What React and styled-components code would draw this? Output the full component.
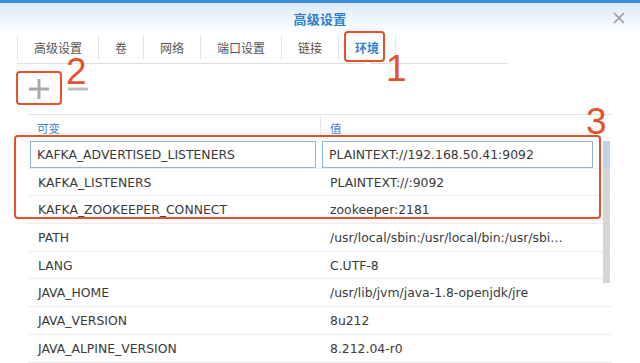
import React from "react";
import styled, { createGlobalStyle } from "styled-components";

const GlobalStyle = createGlobalStyle`
	html, body {
		margin: 0;
		padding: 0;
		background: #ffffff;
	}
	body {
		font-family: "DejaVu Sans", "Noto Sans CJK SC", sans-serif;
	}
`;

const Window = styled.div`
	position: relative;
	display: flex;
	flex-direction: column;
	width: 640px;
	height: 363px;
	overflow: hidden;
	background: #ffffff;
`;

const TopStrip = styled.div`
	height: 3px;
	background: #3b8ede;
`;

const TitleBar = styled.div`
	display: grid;
	grid-template-columns: 1fr auto 1fr;
	align-items: center;
	height: 30px;
	background: linear-gradient(to bottom, #dbeafa 0%, #f3f8fe 70%, #ffffff 100%);
`;

const Title = styled.div`
	grid-column: 2;
	font-family: "Noto Sans CJK SC", sans-serif;
	font-size: 13px;
	font-weight: 700;
	color: #2f7fcf;
	letter-spacing: 0.3px;
`;

const CloseButton = styled.div`
	grid-column: 3;
	justify-self: end;
	display: flex;
	margin-right: 15px;
	cursor: pointer;
`;

const Tabs = styled.div`
	display: flex;
	align-items: stretch;
	width: 491px;
	height: 30px;
	margin-left: 17px;
	border-bottom: 1px solid #e0e0e0;
`;

const Tab = styled.div`
	position: relative;
	display: flex;
	align-items: center;
	justify-content: center;
	padding: 0 ${(p) => p.$pad || 16}px;
	margin: 2px 0 3px;
	border-left: 1px solid #e6e6e6;
	font-family: "Noto Sans CJK SC", sans-serif;
	font-size: 12px;
	color: ${(p) => (p.$active ? "#2f7fd2" : "#555555")};
	font-weight: ${(p) => (p.$active ? 700 : 400)};
	&:last-child {
		border-right: 1px solid #e6e6e6;
	}
	${(p) =>
		p.$active &&
		`
		&::after {
			content: "";
			position: absolute;
			left: 50%;
			bottom: -7px;
			width: 6px;
			height: 6px;
			margin-left: -3px;
			background: #ffffff;
			border-left: 1px solid #d8d8d8;
			border-top: 1px solid #d8d8d8;
			transform: rotate(45deg);
		}
	`}
`;

const Toolbar = styled.div`
	display: flex;
	align-items: center;
	gap: 17px;
	height: 50px;
	padding-left: 27px;
`;

const ToolButton = styled.div`
	display: flex;
	cursor: pointer;
`;

const Table = styled.div`
	display: flex;
	flex-direction: column;
	width: 584px;
	margin-left: 28px;
	border-top: 1px solid #e4e4e4;
`;

const HeaderRow = styled.div`
	display: grid;
	grid-template-columns: 292px 1fr;
	height: 26px;
`;

const HeaderCell = styled.div`
	display: flex;
	align-items: center;
	padding-left: 9px;
	font-family: "Noto Sans CJK SC", sans-serif;
	font-size: 11.5px;
	color: #3a82d2;
	border-left: ${(p) => (p.$divider ? "1px solid #e6e6e6" : "none")};
	margin: ${(p) => (p.$divider ? "2px 0" : "0")};
`;

const Body = styled.div`
	position: relative;
	display: flex;
	flex-direction: column;
`;

const Row = styled.div`
	display: grid;
	grid-template-columns: 292px 1fr;
	box-sizing: border-box;
	height: 27.7px;
	border-bottom: 1px solid #ededed;
`;

const Cell = styled.div`
	display: flex;
	align-items: center;
	box-sizing: border-box;
	padding-left: ${(p) => (p.$editing ? 6 : 9)}px;
	margin: ${(p) => (p.$editing ? (p.$right ? "0 19px 0 2px" : "0 4px 0 2px") : "0")};
	border: ${(p) => (p.$editing ? "1px solid #8fb6de" : "1px solid transparent")};
	font-size: 12.4px;
	color: #3a3a3a;
	white-space: nowrap;
	overflow: hidden;
`;

const Scrollbar = styled.div`
	position: absolute;
	top: 0;
	right: 2px;
	width: 7px;
	height: 142px;
	background: linear-gradient(to bottom, #c3d2e3 0, #c3d2e3 27px, #d5d5d5 27px, #d5d5d5 100%);
`;

const Annotation = styled.div`
	position: absolute;
	box-sizing: border-box;
	border: 2px solid #e5512b;
	border-radius: 4px;
	pointer-events: none;
`;

const Marker = styled.div`
	position: absolute;
	font-family: "Liberation Sans", sans-serif;
	font-size: 37px;
	line-height: 1;
	color: #e5512b;
	font-weight: 400;
	pointer-events: none;
`;

const tabs = ["高级设置", "卷", "网络", "端口设置", "链接", "环境"];

const rows = [
	["KAFKA_ADVERTISED_LISTENERS", "PLAINTEXT://192.168.50.41:9092"],
	["KAFKA_LISTENERS", "PLAINTEXT://:9092"],
	["KAFKA_ZOOKEEPER_CONNECT", "zookeeper:2181"],
	["PATH", "/usr/local/sbin:/usr/local/bin:/usr/sbi…"],
	["LANG", "C.UTF-8"],
	["JAVA_HOME", "/usr/lib/jvm/java-1.8-openjdk/jre"],
	["JAVA_VERSION", "8u212"],
	["JAVA_ALPINE_VERSION", "8.212.04-r0"],
];

function CloseIcon() {
	return (
		<svg width="12" height="12" viewBox="0 0 12 12">
			<path d="M1 1 L11 11 M11 1 L1 11" stroke="#9a9a9a" strokeWidth="1.6" />
		</svg>
	);
}

function PlusIcon() {
	return (
		<svg width="24" height="22" viewBox="0 0 24 22">
			<path d="M12 1 V21 M2 11 H22" stroke="#a9a9a9" strokeWidth="3" />
		</svg>
	);
}

function MinusIcon() {
	return (
		<svg width="20" height="22" viewBox="0 0 20 22">
			<path d="M0 11 H20" stroke="#bdbdbd" strokeWidth="3" />
		</svg>
	);
}

export default function App() {
	return (
		<>
			<GlobalStyle />
			<Window>
				<TopStrip />
				<TitleBar>
					<Title>高级设置</Title>
					<CloseButton>
						<CloseIcon />
					</CloseButton>
				</TitleBar>
				<Tabs>
					{tabs.map((t, i) => (
						<Tab key={t} $active={i === tabs.length - 1}>
							{t}
						</Tab>
					))}
				</Tabs>
				<Toolbar>
					<ToolButton>
						<PlusIcon />
					</ToolButton>
					<ToolButton>
						<MinusIcon />
					</ToolButton>
				</Toolbar>
				<Table>
					<HeaderRow>
						<HeaderCell>可变</HeaderCell>
						<HeaderCell $divider>值</HeaderCell>
					</HeaderRow>
					<Body>
						{rows.map(([name, value], i) => (
							<Row key={name}>
								<Cell $editing={i === 0}>{name}</Cell>
								<Cell $editing={i === 0} $right>
									{value}
								</Cell>
							</Row>
						))}
						<Scrollbar />
					</Body>
				</Table>

				<Annotation style={{ left: 344, top: 31, width: 41, height: 31 }} />
				<Marker style={{ left: 386, top: 50 }}>1</Marker>
				<Annotation style={{ left: 16, top: 71, width: 46, height: 34 }} />
				<Marker style={{ left: 66, top: 53 }}>2</Marker>
				<Annotation style={{ left: 14, top: 135, width: 587, height: 84 }} />
				<Marker style={{ left: 586, top: 103 }}>3</Marker>
			</Window>
		</>
	);
}
